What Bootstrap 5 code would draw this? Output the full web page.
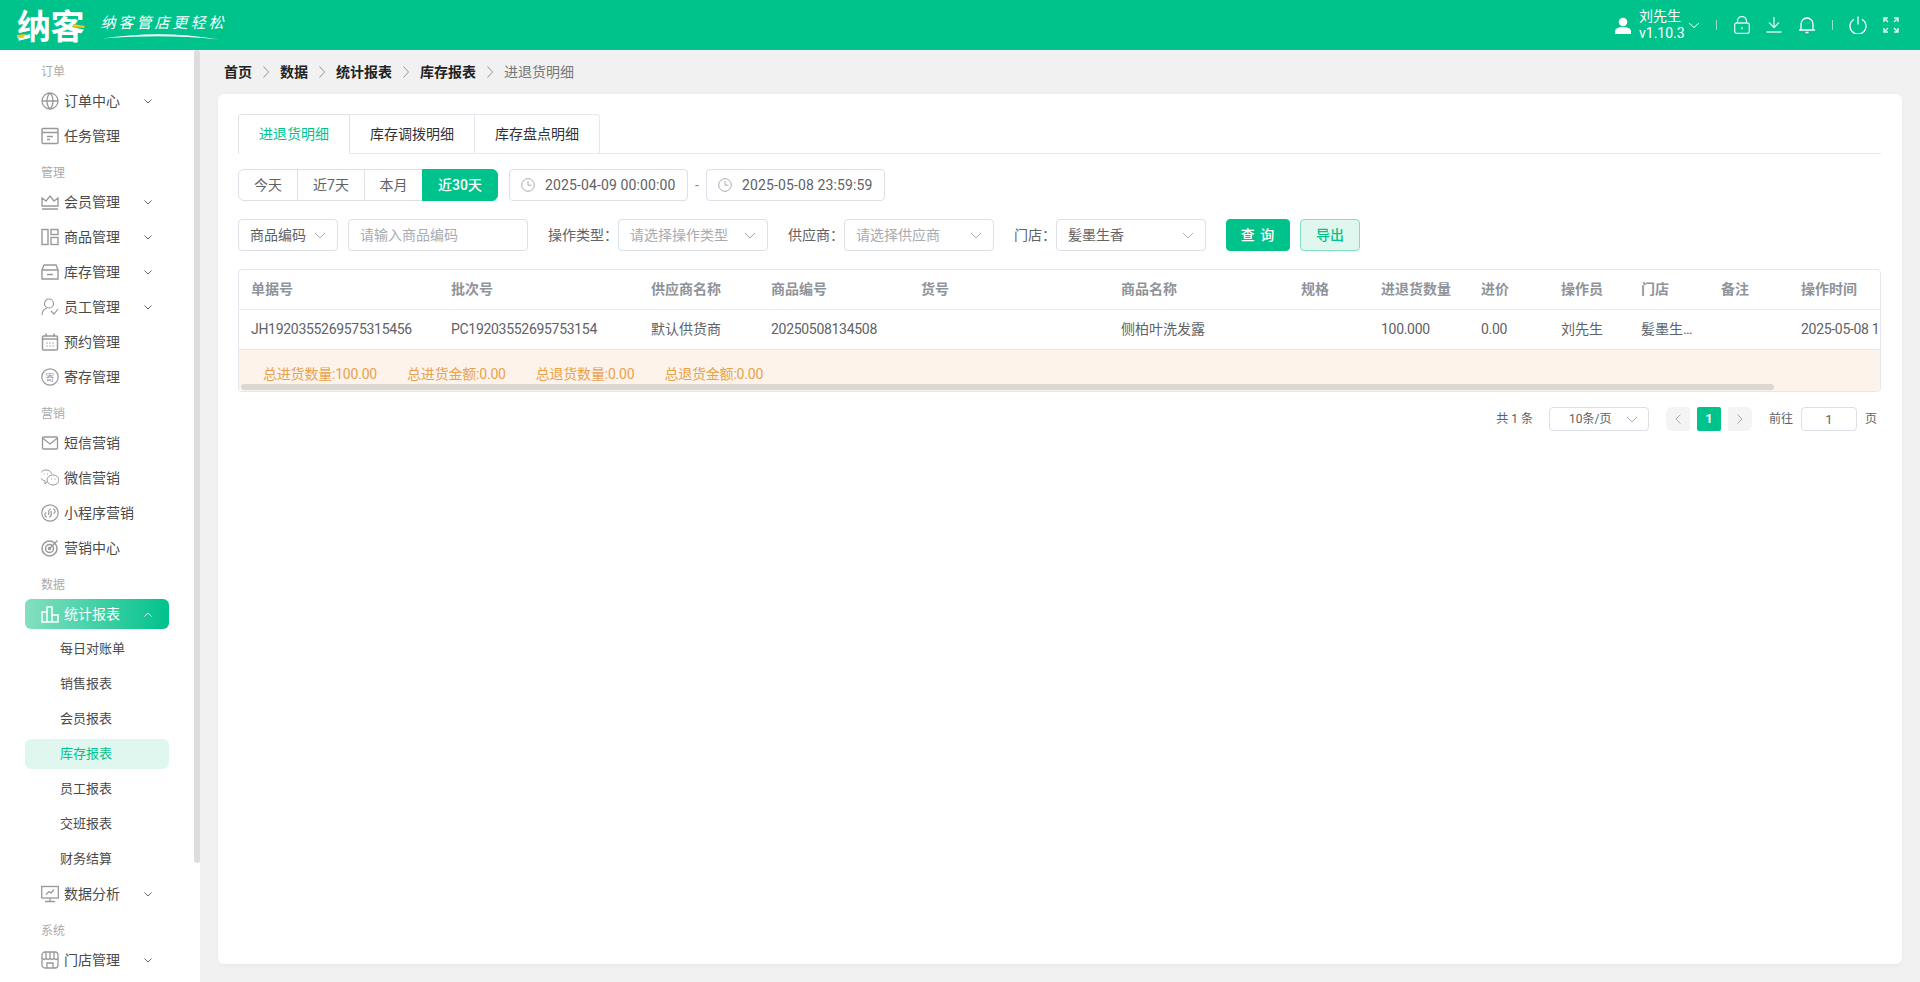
<!DOCTYPE html>
<html lang="zh-CN">
<head>
<meta charset="utf-8">
<title>进退货明细</title>
<link rel="stylesheet" href="https://cdn.jsdelivr.net/npm/bootstrap@5.3.0/dist/css/bootstrap.min.css">
<style>
html,body{height:100%;overflow:hidden}
body{font-family:"Roboto","Noto Sans CJK SC",sans-serif;font-size:14px;color:#606266;background:#f1f1f1}
svg{display:block;flex:none}
.topbar{height:50px;background:#00c28b;padding:0 21px 0 17px;flex-wrap:nowrap}
.brand-box{position:relative;width:212px;height:50px;color:#fff}
.brand-name{font:700 34px/50px "Noto Sans CJK SC",sans-serif;letter-spacing:-.5px;width:70px;white-space:nowrap}
.brand-slogan{font:400 15px/18px "Noto Sans CJK SC",sans-serif;letter-spacing:3px;transform:skewX(-14deg);margin:-6px 0 0 15px;white-space:nowrap}
.brand-deco{position:absolute;left:0;top:0;overflow:visible}
.user-name{color:#fff;font-size:14px;line-height:17px;text-align:center;width:42px;margin:0 7px 0 8px;white-space:nowrap}
.top-sep{width:1px;height:10px;background:rgba(255,255,255,.55);margin:0 17px 0 16px}
.top-sep2{margin:0 16px}
.layout{height:932px}
.sidemenu{width:200px;flex:none;background:#fff;padding:0 31px 0 25px;position:relative;overflow:hidden}
.side-thumb{position:absolute;right:0;top:0;width:6px;height:813px;background:#ddd;border-radius:3px}
.group-label{font-size:12px;line-height:22px;height:22px;margin:11px 0 3px 16px;color:#aaa}
.menu-row{height:30px;margin-bottom:5px;padding-left:16px;border-radius:6px;color:#4a4a4a;font-size:14px;white-space:nowrap;line-height:30px}
.menu-row>.ico{margin-right:5px;width:18px;height:18px}
.menu-row .chev{margin-left:auto;margin-right:17px}
.menu-open{background:linear-gradient(90deg,#84dfc0,#00c28b);color:#fff}
.sub-row{height:30px;margin-bottom:5px;padding-left:35px;border-radius:6px;color:#4a4a4a;font-size:13px;line-height:30px}
.sub-active{background:#e0f7ef;color:#00c28b}
.page-area{min-width:0;padding:0 18px 18px}
.crumb-bar{height:44px;margin:0;font-size:14px;align-items:center;padding-left:6px;--bs-breadcrumb-margin-bottom:0}
.crumb-bar .breadcrumb-item{color:#222;font-weight:700;display:flex;align-items:center;padding-left:0}
.crumb-bar .breadcrumb-item+.breadcrumb-item{padding-left:0}
.crumb-bar .breadcrumb-item+.breadcrumb-item::before{display:none}
.crumb-bar .crumb-now{color:#777;font-weight:400}
.crumb-sep{margin:0 11px}
.main-card{height:870px;border:0;border-radius:6px;padding:20px 21px 0 20px;box-shadow:0 1px 4px rgba(0,0,0,.04)}
.tabs-line{--bs-nav-tabs-border-color:#e4e7ed;border-bottom:1px solid #e4e7ed;height:40px}
.tabs-line .nav-link{height:40px;border:1px solid #e4e7ed;border-left-width:0;border-radius:0;margin:0;padding:0;color:#303133;line-height:38px;text-align:center;width:125px}
.tabs-line .nav-item:first-child .nav-link{border-left-width:1px;width:112px;border-top-left-radius:4px}
.tabs-line .nav-item:last-child .nav-link{border-top-right-radius:4px}
.tabs-line .nav-link.active{color:#00c28b;border-bottom-color:#fff}
.range-row{margin-top:15px}
.range-group{margin-right:11px}
.range-group .btn{height:32px;padding:0;font-size:14px;line-height:30px;color:#606266;border-color:#dcdfe6;background:#fff;flex:none}
.range-group .btn.active{background:#00c28b;border-color:#00c28b;color:#fff;font-weight:500}
.w-a{width:60px}.w-b{width:68px}.w-c{width:59px}.w-d{width:76px}
.date-box{width:179px;height:32px;border:1px solid #dcdfe6;border-radius:4px;padding-left:11px;color:#606266;background:#fff;letter-spacing:.12px}
.date-box svg{margin-right:10px}
.dash{width:18px;text-align:center;color:#888}
.filter-row{margin-top:18px;white-space:nowrap}
.fake-select{height:32px;border:1px solid #dcdfe6;border-radius:4px;padding:0 11px;background:#fff;color:#606266;justify-content:space-between}
.ph{color:#a8abb2}
.txt-input{height:32px;width:180px;border:1px solid #dcdfe6;border-radius:4px;font-size:14px;padding:0 11px;margin:0 20px 0 10px}
.txt-input::placeholder{color:#a8abb2}
.flabel{color:#606266}
.gap-l{margin-left:20px}
.w-100px{width:100px}.w-150px{width:150px}
.btn-query{width:64px;height:32px;margin-left:20px;padding:0;background:#00c28b;border-color:#00c28b;color:#fff;font-size:14px;font-weight:500;letter-spacing:1px;border-radius:4px}
.btn-export{width:60px;height:32px;margin-left:10px;padding:0;background:#e0f7ef;border-color:#7fe0c4;color:#00c28b;font-size:14px;font-weight:500;border-radius:4px}
.table-wrap{margin-top:18px;height:123px;border:1px solid #e4e7ed;border-radius:4px;overflow:hidden;position:relative;width:1643px}
.data-table{table-layout:fixed;width:1731px;margin:0;font-size:14px;--bs-table-color:#606266}
.data-table th,.data-table td{height:40px;padding:0 0 0 12px;vertical-align:middle;border-bottom:1px solid #e8eaef;white-space:nowrap;overflow:hidden}
.data-table th{color:#909399;font-weight:700;height:39px}
.num-cell{letter-spacing:-.3px}
.data-table .shop-cell{padding-right:14px}
.sum-row{height:43px;background:#fdf3ea;color:#e9a24c;padding:14px 0 0 24px;gap:30px;font-size:14px;letter-spacing:-.2px}
.hbar{position:absolute;left:2px;bottom:1px;width:1533px;height:6px;border-radius:3px;background:#dbd8d3}
.pager-row{margin-top:15px;height:24px;padding-right:4px;font-size:12px;white-space:nowrap}
.mini-select{width:100px;height:24px;border:1px solid #dcdfe6;border-radius:4px;padding:0 10px 0 19px;margin:0 17px 0 16px;font-size:12px}
.pg-list{--bs-pagination-padding-x:0;--bs-pagination-padding-y:0;margin:0 17px 0 0;gap:8px}
.pg-list .page-link{width:24px;height:24px;display:flex;align-items:center;justify-content:center;border:0;border-radius:2px;background:#f4f4f5;color:#606266;font-size:13px;font-weight:700}
.pg-list .active .page-link{background:#00c28b;color:#fff}
.go-input{width:56px;height:24px;border:1px solid #dcdfe6;border-radius:4px;margin:0 8px;text-align:center;font-size:13px;color:#606266}
</style>
</head>
<body>
<header class="navbar topbar d-flex align-items-center justify-content-between">
  <div class="brand-box d-flex align-items-center">
    <div class="brand-name">纳客</div>
    <div class="brand-slogan">纳客管店更轻松</div>
    <svg class="brand-deco" width="212" height="50" viewBox="0 0 212 50"><path d="M86 38.500C120 33 160 32 202 39.500C160 35 125 35.500 86 38.500Z" fill="#fff"/><path d="M0 35l9-1-3 4H0z" fill="#f7c61a"/><path d="M56 24l12 2-1 2-10-1z" fill="#f7c61a"/></svg>
  </div>
  <div class="d-flex align-items-center">
    <svg width="16" height="17" viewBox="0 0 16 17" fill="#fff"><circle cx="8" cy="5" r="4.300"/><path d="M0 17v-2.500C0 11.500 3 10 8 10s8 1.500 8 4.500V17z"/></svg>
    <div class="user-name">刘先生<br>v1.10.3</div>
    <svg width="12" height="7" viewBox="0 0 12 7" fill="none" stroke="#fff"><path d="M1 1l5 4.500L11 1"/></svg>
    <span class="top-sep"></span>
    <svg class="me-3" width="16" height="18" viewBox="0 0 16 18" fill="none" stroke="#d5f5ea" stroke-width="1.300"><rect x=".7" y="7" width="14.600" height="10.300" rx="2"/><path d="M3.500 7V5a4.500 4.500 0 0 1 9 0v2M8 11v2.500"/></svg>
    <svg class="me-3" width="16" height="16" viewBox="0 0 16 16" fill="none" stroke="#d5f5ea" stroke-width="1.300"><path d="M8 0v10M3 5.500l5 5 5-5M.5 15h15"/></svg>
    <svg width="18" height="18" viewBox="0 0 18 18" fill="none" stroke="#fff" stroke-width="1.300"><path d="M3 14V8a6 6 0 0 1 12 0v6M1 14h16M7.500 16.500h3M9 1V2"/></svg>
    <span class="top-sep top-sep2"></span>
    <svg class="me-3" width="18" height="18" viewBox="0 0 18 18" fill="none" stroke="#fff" stroke-width="1.300"><path d="M5 3.200a8 8 0 1 0 8 0M9 .5v8"/></svg>
    <svg width="16" height="16" viewBox="0 0 16 16" fill="none" stroke="#d5f5ea" stroke-width="1.500"><path d="M1 5V1h4M1 1l4 4M11 1h4v4M15 1l-4 4M1 11v4h4M1 15l4-4M15 11v4h-4M15 15l-4-4"/></svg>
  </div>
</header>
<div class="layout d-flex">
  <aside class="sidemenu">
    <div class="side-thumb"></div>
    <div class="group-label">订单</div>
    <div class="menu-row d-flex align-items-center"><svg class="ico" viewBox="0 0 18 18" fill="none" stroke="#999" stroke-width="1.300"><circle cx="9" cy="9" r="8"/><path d="M1 9h16M9 1C5 5 5 13 9 17M9 1c4 4 4 12 0 16"/></svg>订单中心<svg class="chev" width="8" height="5" viewBox="0 0 8 5" fill="none" stroke="#666"><path d="M.5.500L4 4 7.500.5"/></svg></div>
    <div class="menu-row d-flex align-items-center"><svg class="ico" viewBox="0 0 18 18" fill="none" stroke="#999" stroke-width="1.400"><rect x="1" y="1.500" width="16" height="15" rx="1"/><path d="M1 5.500h16M6 9.500h6M6 12.500h3"/></svg>任务管理</div>
    <div class="group-label">管理</div>
    <div class="menu-row d-flex align-items-center"><svg class="ico" viewBox="0 0 18 18" fill="none" stroke="#999" stroke-width="1.300"><path d="M1 5l4 3 4-5 4 5 4-3v8H1zM1 16h16"/></svg>会员管理<svg class="chev" width="8" height="5" viewBox="0 0 8 5" fill="none" stroke="#666"><path d="M.5.500L4 4 7.500.5"/></svg></div>
    <div class="menu-row d-flex align-items-center"><svg class="ico" viewBox="0 0 18 18" fill="none" stroke="#999" stroke-width="1.400"><rect x="1" y="1.500" width="6" height="15"/><rect x="10" y="1.500" width="7" height="5"/><rect x="10" y="9.500" width="7" height="7"/></svg>商品管理<svg class="chev" width="8" height="5" viewBox="0 0 8 5" fill="none" stroke="#666"><path d="M.5.500L4 4 7.500.5"/></svg></div>
    <div class="menu-row d-flex align-items-center"><svg class="ico" viewBox="0 0 18 18" fill="none" stroke="#999" stroke-width="1.400"><path d="M1 7l2-5h12l2 5M1 7h16v9H1zM6 11.500h6"/></svg>库存管理<svg class="chev" width="8" height="5" viewBox="0 0 8 5" fill="none" stroke="#666"><path d="M.5.500L4 4 7.500.5"/></svg></div>
    <div class="menu-row d-flex align-items-center"><svg class="ico" viewBox="0 0 18 18" fill="none" stroke="#999" stroke-width="1.200"><circle cx="8" cy="5.500" r="4.500"/><path d="M1 17c0-4 2-6 5-7M10 13l3 3 4-5"/></svg>员工管理<svg class="chev" width="8" height="5" viewBox="0 0 8 5" fill="none" stroke="#666"><path d="M.5.500L4 4 7.500.5"/></svg></div>
    <div class="menu-row d-flex align-items-center"><svg class="ico" viewBox="0 0 18 18" fill="none" stroke="#999" stroke-width="1.500"><rect x="1.500" y="3" width="15" height="14" rx="1"/><path d="M1.500 6h15M5 .5v3M13 .5v3M5.500 10h1M8.500 10h1M11.500 10h1M5.500 13h1M8.500 13h1M11.500 13h1"/></svg>预约管理</div>
    <div class="menu-row d-flex align-items-center"><svg class="ico" viewBox="0 0 18 18" fill="none" stroke="#999" stroke-width="1.200"><circle cx="9" cy="9" r="8.200"/><text x="9" y="12.500" font-size="9" text-anchor="middle" fill="#999" stroke="none" font-family="Noto Sans CJK SC">寄</text></svg>寄存管理</div>
    <div class="group-label">营销</div>
    <div class="menu-row d-flex align-items-center"><svg class="ico" viewBox="0 0 18 18" fill="none" stroke="#999" stroke-width="1.300"><rect x="1.500" y="3" width="15" height="12" rx="1"/><path d="M1.500 4l7.500 6 7.500-6"/></svg>短信营销</div>
    <div class="menu-row d-flex align-items-center"><svg class="ico" viewBox="0 0 18 18" fill="none" stroke="#999" stroke-width="1"><path d="M6 13l-2 2v-3C1 11-1 9-1 6.500-1 3 2 1 5 1s5 2 6 4"/><ellipse cx="12" cy="11" rx="6" ry="5"/><path d="M2.500 5h1M6 5h1M10 10h1M13.500 10h1"/></svg>微信营销</div>
    <div class="menu-row d-flex align-items-center"><svg class="ico" viewBox="0 0 18 18" fill="none" stroke="#999" stroke-width="1.200"><circle cx="9" cy="9" r="8.200"/><path d="M6 13a2.300 2.300 0 0 1-.5-4.500M12 5a2.300 2.300 0 0 1 .5 4.500M7.800 11V7A2.200 2.200 0 0 1 10 5M10.200 7v4A2.200 2.200 0 0 1 8 13"/></svg>小程序营销</div>
    <div class="menu-row d-flex align-items-center"><svg class="ico" viewBox="0 0 18 18" fill="none" stroke="#999" stroke-width="1.500"><circle cx="8.500" cy="9.500" r="7.500"/><circle cx="8.500" cy="9.500" r="4"/><circle cx="8.500" cy="9.500" r="1"/><path d="M8.500 9.500L16.500 1.500"/></svg>营销中心</div>
    <div class="group-label">数据</div>
    <div class="menu-row menu-open d-flex align-items-center"><svg class="ico" viewBox="0 0 18 18" fill="none" stroke="#fff" stroke-width="1.500"><path d="M1 17V7h5V2h5v8h6v7z M6 7v10M11 10v7"/></svg>统计报表<svg class="chev" width="8" height="5" viewBox="0 0 8 5" fill="none" stroke="#fff"><path d="M.5 4.500L4 1l3.500 3.500"/></svg></div>
    <div class="sub-row">每日对账单</div>
    <div class="sub-row">销售报表</div>
    <div class="sub-row">会员报表</div>
    <div class="sub-row sub-active">库存报表</div>
    <div class="sub-row">员工报表</div>
    <div class="sub-row">交班报表</div>
    <div class="sub-row">财务结算</div>
    <div class="menu-row d-flex align-items-center"><svg class="ico" viewBox="0 0 18 18" fill="none" stroke="#999" stroke-width="1.300"><rect x=".7" y="1.500" width="16.600" height="11.500"/><path d="M9 13v3.500M4 16.500h10M5 9.500l3-3 2 1.500 3-3.500"/></svg>数据分析<svg class="chev" width="8" height="5" viewBox="0 0 8 5" fill="none" stroke="#666"><path d="M.5.500L4 4 7.500.5"/></svg></div>
    <div class="group-label">系统</div>
    <div class="menu-row d-flex align-items-center"><svg class="ico" viewBox="0 0 18 18" fill="none" stroke="#999" stroke-width="1.300"><rect x="1" y="1" width="16" height="16" rx="3"/><path d="M1 7c2 2 3 2 4 0 1 2 3 2 4 0 1 2 3 2 4 0 1 2 3 2 4 0M5 1v6M9 1v6M13 1v6M6 17v-5h6v5"/></svg>门店管理<svg class="chev" width="8" height="5" viewBox="0 0 8 5" fill="none" stroke="#666"><path d="M.5.500L4 4 7.500.5"/></svg></div>
  </aside>
  <main class="page-area flex-grow-1">
    <nav class="breadcrumb crumb-bar">
      <span class="breadcrumb-item">首页</span>
      <svg class="crumb-sep" width="6" height="12" viewBox="0 0 6 12" fill="none" stroke="#999"><path d="M.5.500L5.500 6 .5 11.500"/></svg>
      <span class="breadcrumb-item">数据</span>
      <svg class="crumb-sep" width="6" height="12" viewBox="0 0 6 12" fill="none" stroke="#999"><path d="M.5.500L5.500 6 .5 11.500"/></svg>
      <span class="breadcrumb-item">统计报表</span>
      <svg class="crumb-sep" width="6" height="12" viewBox="0 0 6 12" fill="none" stroke="#999"><path d="M.5.500L5.500 6 .5 11.500"/></svg>
      <span class="breadcrumb-item">库存报表</span>
      <svg class="crumb-sep" width="6" height="12" viewBox="0 0 6 12" fill="none" stroke="#999"><path d="M.5.500L5.500 6 .5 11.500"/></svg>
      <span class="breadcrumb-item crumb-now">进退货明细</span>
    </nav>
    <section class="card main-card">
      <ul class="nav nav-tabs tabs-line">
        <li class="nav-item"><a class="nav-link active" href="#">进退货明细</a></li>
        <li class="nav-item"><a class="nav-link" href="#">库存调拨明细</a></li>
        <li class="nav-item"><a class="nav-link" href="#">库存盘点明细</a></li>
      </ul>
      <div class="range-row d-flex align-items-center">
        <div class="btn-group range-group">
          <button class="btn w-a">今天</button><button class="btn w-b">近7天</button><button class="btn w-c">本月</button><button class="btn w-d active">近30天</button>
        </div>
        <div class="date-box d-flex align-items-center"><svg width="14" height="14" viewBox="0 0 14 14" fill="none" stroke="#a8abb2"><circle cx="7" cy="7" r="6.300"/><path d="M7 3v4.200h3.500"/></svg>2025-04-09 00:00:00</div>
        <div class="dash">-</div>
        <div class="date-box d-flex align-items-center"><svg width="14" height="14" viewBox="0 0 14 14" fill="none" stroke="#a8abb2"><circle cx="7" cy="7" r="6.300"/><path d="M7 3v4.200h3.500"/></svg>2025-05-08 23:59:59</div>
      </div>
      <div class="filter-row d-flex align-items-center">
        <div class="fake-select w-100px d-flex align-items-center">商品编码<svg width="12" height="7" viewBox="0 0 12 7" fill="none" stroke="#a8abb2"><path d="M1 1l5 5 5-5"/></svg></div>
        <input class="txt-input" placeholder="请输入商品编码">
        <span class="flabel">操作类型：</span>
        <div class="fake-select w-150px d-flex align-items-center"><span class="ph">请选择操作类型</span><svg width="12" height="7" viewBox="0 0 12 7" fill="none" stroke="#a8abb2"><path d="M1 1l5 5 5-5"/></svg></div>
        <span class="flabel gap-l">供应商：</span>
        <div class="fake-select w-150px d-flex align-items-center"><span class="ph">请选择供应商</span><svg width="12" height="7" viewBox="0 0 12 7" fill="none" stroke="#a8abb2"><path d="M1 1l5 5 5-5"/></svg></div>
        <span class="flabel gap-l">门店：</span>
        <div class="fake-select w-150px d-flex align-items-center">髪墨生香<svg width="12" height="7" viewBox="0 0 12 7" fill="none" stroke="#a8abb2"><path d="M1 1l5 5 5-5"/></svg></div>
        <button class="btn btn-query">查 询</button>
        <button class="btn btn-export">导出</button>
      </div>
      <div class="table-wrap">
        <table class="table data-table">
          <colgroup><col style="width:200px"><col style="width:200px"><col style="width:120px"><col style="width:150px"><col style="width:200px"><col style="width:180px"><col style="width:80px"><col style="width:100px"><col style="width:80px"><col style="width:80px"><col style="width:80px"><col style="width:80px"><col style="width:181px"></colgroup>
          <thead><tr><th>单据号</th><th>批次号</th><th>供应商名称</th><th>商品编号</th><th>货号</th><th>商品名称</th><th>规格</th><th>进退货数量</th><th>进价</th><th>操作员</th><th>门店</th><th>备注</th><th>操作时间</th></tr></thead>
          <tbody><tr><td class="num-cell">JH1920355269575315456</td><td class="num-cell">PC19203552695753154</td><td>默认供货商</td><td class="num-cell">20250508134508</td><td></td><td>侧柏叶洗发露</td><td></td><td class="num-cell">100.000</td><td class="num-cell">0.00</td><td>刘先生</td><td class="text-truncate shop-cell">髪墨生香</td><td></td><td class="num-cell">2025-05-08 13:45:08</td></tr></tbody>
        </table>
        <div class="sum-row d-flex"><span>总进货数量:100.00</span><span>总进货金额:0.00</span><span>总退货数量:0.00</span><span>总退货金额:0.00</span></div>
        <div class="hbar"></div>
      </div>
      <div class="pager-row d-flex align-items-center justify-content-end">
        <span>共 1 条</span>
        <div class="mini-select d-flex align-items-center justify-content-between">10条/页<svg width="12" height="7" viewBox="0 0 12 7" fill="none" stroke="#a8abb2"><path d="M1 1l5 5 5-5"/></svg></div>
        <ul class="pagination pg-list">
          <li class="page-item"><a class="page-link" href="#"><svg width="6" height="10" viewBox="0 0 6 10" fill="none" stroke="#a8abb2"><path d="M5.500.5L1 5l4.500 4.500"/></svg></a></li>
          <li class="page-item active"><a class="page-link" href="#">1</a></li>
          <li class="page-item"><a class="page-link" href="#"><svg width="6" height="10" viewBox="0 0 6 10" fill="none" stroke="#a8abb2"><path d="M.5.500L5 5 .5 9.500"/></svg></a></li>
        </ul>
        <span>前往</span><input class="go-input" value="1"><span>页</span>
      </div>
    </section>
  </main>
</div>
<script src="https://cdn.jsdelivr.net/npm/bootstrap@5.3.0/dist/js/bootstrap.bundle.min.js"></script>
</body>
</html>
